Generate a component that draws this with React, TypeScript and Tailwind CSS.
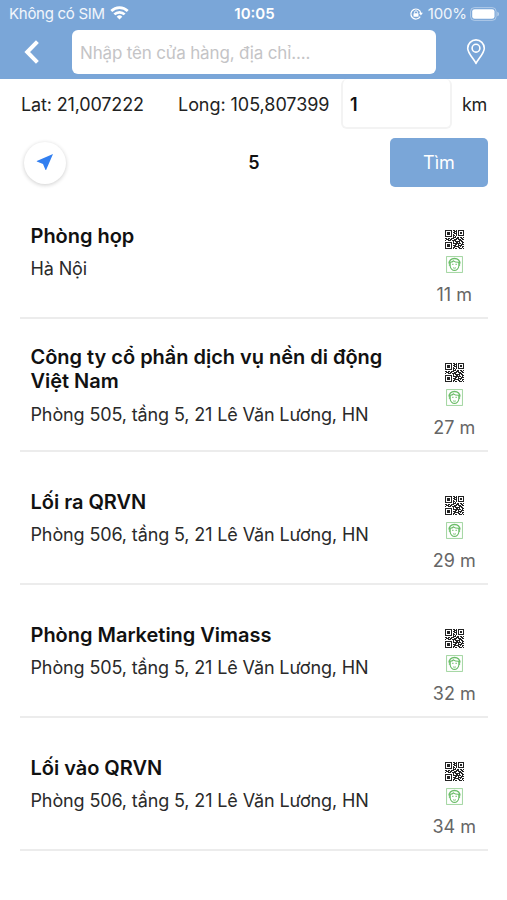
import { ReactNode } from "react";

const places = [
  { name: "Phòng họp", address: "Hà Nội", distance: "11 m" },
  {
    name: "Công ty cổ phần dịch vụ nền di động Việt Nam",
    address: "Phòng 505, tầng 5, 21 Lê Văn Lương, HN",
    distance: "27 m",
  },
  { name: "Lối ra QRVN", address: "Phòng 506, tầng 5, 21 Lê Văn Lương, HN", distance: "29 m" },
  { name: "Phòng Marketing Vimass", address: "Phòng 505, tầng 5, 21 Lê Văn Lương, HN", distance: "32 m" },
  { name: "Lối vào QRVN", address: "Phòng 506, tầng 5, 21 Lê Văn Lương, HN", distance: "34 m" },
];

const qrRows = [
  "1111111011010111111",
  "1000001001110100001",
  "1011101011010101101",
  "1011101001110101101",
  "1011101010010100001",
  "1000001011010111111",
  "1111111010100000000",
  "0000000011101101101",
  "1101101110011100110",
  "0111011001110111011",
  "1001110111100011100",
  "0000000010111110110",
  "1111111010011010011",
  "1000001011111111010",
  "1011101000110100111",
  "1011101011100111100",
  "1011101001111101011",
  "1000001011000110010",
  "1111111010110011101",
];

function QrIcon() {
  return (
    <svg viewBox="0 0 19 19" className="h-[19px] w-[19px]" fill="#222" shapeRendering="crispEdges">
      {qrRows.map((row, y) =>
        row.split("").map((cell, x) => (cell === "1" ? <rect key={`${x}-${y}`} x={x} y={y} width="1" height="1" /> : null))
      )}
    </svg>
  );
}

function FaceIcon() {
  return (
    <svg viewBox="0 0 17 17" className="h-[17px] w-[17px]" fill="none" stroke="#6cbd69">
      <rect x="0.6" y="0.6" width="15.8" height="15.8" strokeWidth="0.9" opacity="0.7" />
      <path d="M3.4 7.8C2.6 4.6 5.2 2.5 8.5 2.5s5.9 2.1 5.1 5.3" strokeWidth="1.4" />
      <path d="M4.2 6.3v3.6c0 2.3 2.2 4.5 4.3 4.5s4.3-2.2 4.3-4.5V6.3C10.8 6.4 8.8 6 7.4 4.9 6.8 5.8 5.8 6.3 4.2 6.3Z" strokeWidth="1.1" />
      <path d="M3.4 8v2M13.6 8v2M6 8.3h1.6M9.4 8.3H11M7 11.8c.8.5 2.2.5 3 0" strokeWidth="0.9" />
    </svg>
  );
}

function StatusBar() {
  return (
    <div className="grid h-7 grid-cols-3 items-center pl-[9px] pr-[7px] text-[15px] text-white/90">
      <div className="flex items-center gap-[5px] whitespace-nowrap">
        <span className="tracking-[-0.28px]">Không có SIM</span>
        <svg viewBox="0 0 20 15" className="h-[14px] w-[19px] shrink-0 -translate-y-px" fill="none" stroke="white" strokeWidth="2.9">
          <path d="M1.2 5.4a12.4 12.4 0 0 1 17.6 0" />
          <path d="M4.5 9a7.8 7.8 0 0 1 11 0" />
          <path d="M10 14.5 7 11.4a4.3 4.3 0 0 1 6 0Z" fill="white" stroke="none" />
        </svg>
      </div>
      <span className="text-center font-semibold text-white">10:05</span>
      <div className="flex items-center justify-end">
        <svg viewBox="0 0 14 14" className="mr-[5px] h-[14px] w-[14px]" fill="none" stroke="white">
          <path d="M11.2 9.6A5 5 0 1 1 11.8 6" strokeWidth="1.2" />
          <path d="M9.9 5.8h4l-2 2.8Z" fill="white" stroke="none" />
          <rect x="4.5" y="6.2" width="5" height="3.6" rx="0.5" fill="white" stroke="none" />
          <path d="M5.5 6.4V5.3a1.5 1.5 0 0 1 3 0v1.1" strokeWidth="0.9" />
        </svg>
        <span className="tracking-[-0.1px]">100%</span>
        <svg viewBox="0 0 30 14" className="ml-[3px] h-[14px] w-[30px]" fill="white">
          <rect x="0.6" y="0.6" width="25.5" height="12.8" rx="3.8" fill="none" stroke="white" strokeOpacity="0.4" />
          <rect x="2.2" y="2.2" width="22.3" height="9.6" rx="2.4" />
          <path d="M27.4 4.7c2 .6 2 4 0 4.6Z" opacity="0.5" />
        </svg>
      </div>
    </div>
  );
}

function Header() {
  return (
    <header className="h-[79px] bg-[#7aa6d8]">
      <StatusBar />
      <div className="flex items-center pt-0.5">
        <button className="flex w-[72px] pl-[23px]">
          <svg viewBox="0 0 18 26" className="h-[26px] w-[18px]" fill="none" stroke="white" strokeWidth="4" strokeLinecap="square">
            <path d="M13 4 4.2 13l8.8 9" />
          </svg>
        </button>
        <input
          className="h-11 w-[364px] rounded-md bg-white px-2 pt-0.5 text-[17px] tracking-[-0.16px] outline-none placeholder:text-[#c4c4c6]"
          placeholder="Nhập tên cửa hàng, địa chỉ...."
        />
        <button className="flex flex-1 justify-center pl-[9px]">
          <svg viewBox="0 0 20 26" className="h-[26px] w-5" fill="none" stroke="white" strokeWidth="1.6" strokeLinejoin="round">
            <path d="M10 24.4C8.2 20.2 1.7 14.5 1.7 9.2a8.3 8.3 0 0 1 16.6 0c0 5.3-6.5 11-8.3 15.2Z" />
            <circle cx="10" cy="9.2" r="3.9" />
          </svg>
        </button>
      </div>
    </header>
  );
}

function Label({ className, children }: { className: string; children: ReactNode }) {
  return <span className={`whitespace-nowrap text-[18px] text-[#222] ${className}`}>{children}</span>;
}

function App() {
  return (
    <div className="h-[900px] w-[507px] overflow-hidden bg-white font-['Inter',sans-serif] text-[#111]">
      <Header />
      <div className="flex h-[50px] items-center pl-[21px]">
        <Label className="w-[157px] tracking-[-0.15px]">Lat: 21,007222</Label>
        <Label className="w-[163px] tracking-[-0.05px]">Long: 105,807399</Label>
        <input
          className="h-[50px] w-[111px] rounded-md border-2 border-t-0 border-[#f3f3f3] px-[7px] pt-0.5 text-[18px] font-semibold outline-none"
          defaultValue="1"
        />
        <Label className="pl-[10px] tracking-[-0.3px]">km</Label>
      </div>
      <div className="flex h-[57px] items-start pl-6 pr-[19px] pt-[9px]">
        <div className="flex flex-1 items-center justify-between">
          <button className="flex h-[42px] w-[42px] items-center justify-center rounded-full bg-white shadow-[0_1px_4px_rgba(0,0,0,0.2)]">
            <svg viewBox="0 0 18 18" className="h-[18px] w-[18px] -translate-y-px" fill="#327ff0">
              <path d="M17 1 .8 7.9v.7L7 11l2.5 6h.6Z" />
            </svg>
          </button>
          <span className="pl-[52px] text-[18px] font-semibold">5</span>
          <button className="h-[49px] w-[98px] rounded-[5px] bg-[#7aa6d8] text-[18px] text-white">Tìm</button>
        </div>
      </div>
      <ul className="ml-5 mr-[19px]">
        {places.map((place) => (
          <li key={place.name} className="flex h-[133px] items-center border-b-2 border-[#ececec] pl-[10.5px]">
            <div className="w-[370px] pt-[2px]">
              <h2 className="text-[20px] font-semibold leading-[24.5px] tracking-[-0.02px]">{place.name}</h2>
              <p className="mt-2 whitespace-nowrap text-[18px] leading-[25px] tracking-[-0.13px] text-[#2a2a2a]">
                {place.address}
              </p>
            </div>
            <div className="flex flex-1 flex-col items-center pl-[20px] pt-[34px]">
              <QrIcon />
              <div className="mt-[7px]">
                <FaceIcon />
              </div>
              <span className="mt-[10px] text-[18px] leading-6 text-[#666]">{place.distance}</span>
            </div>
          </li>
        ))}
      </ul>
    </div>
  );
}

export default App;
